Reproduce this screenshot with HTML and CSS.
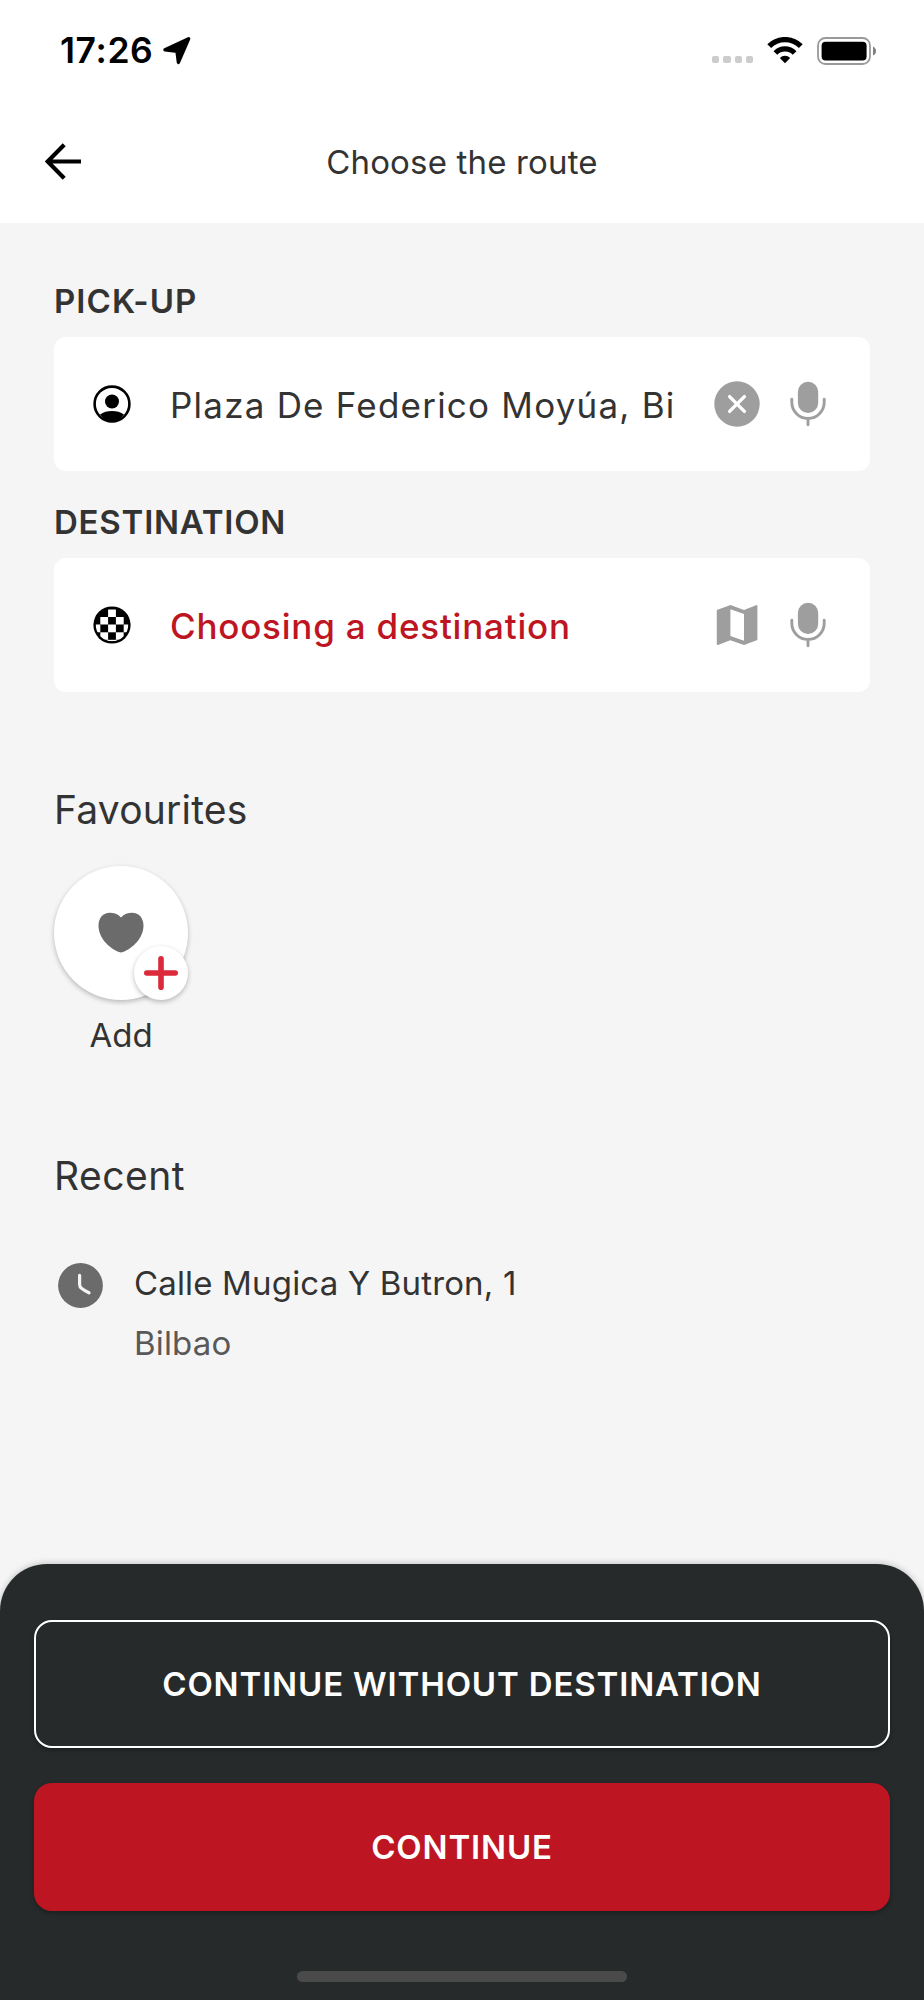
FILE: index.html
```html
<!DOCTYPE html>
<html lang="en">
<head>
    <meta charset="UTF-8">
    <meta name="viewport" content="width=device-width, initial-scale=1.0">
    <title>Choose the route</title>
    <link rel="stylesheet" href="styles.css">
</head>
<body>
    <div class="status-bar">
        <div class="time">17:26</div>
        <svg class="location" width="28" height="28" viewBox="0 0 28 28">
            <path d="M25.6 1.8 L15.4 25.4 L14 14.2 L2 12.8 Z" fill="#000" stroke="#000" stroke-width="3.4" stroke-linejoin="round"/>
        </svg>
        <div class="signal">
            <span></span>
            <span></span>
            <span></span>
            <span></span>
        </div>
        <svg class="wifi" width="36" height="27" viewBox="0 0 36 27">
            <path d="M2.2 9.2 A22.3 22.3 0 0 1 33.8 9.2" fill="none" stroke="#000" stroke-width="5.4"/>
            <path d="M8.4 16 A13.4 13.4 0 0 1 27.6 16" fill="none" stroke="#000" stroke-width="5.2"/>
            <path d="M12.8 20.9 A7.6 7.6 0 0 1 23.2 20.9 L18 26.3 Z"/>
        </svg>
        <svg class="battery" width="60" height="28" viewBox="0 0 60 28">
            <rect x="1" y="1" width="52" height="26" rx="7.5" fill="none" stroke="#999" stroke-width="1.8"/>
            <rect x="4.6" y="4.7" width="45" height="18.7" rx="4"/>
            <path d="M56 9.5 Q59 11 59 14 Q59 17 56 18.5 Z" fill="#808080"/>
        </svg>
    </div>

    <div class="app-bar">
        <svg class="back" width="37" height="37" viewBox="0 0 37 37">
            <path d="M36 18.5 H3 M19.2 1.8 L2.6 18.5 L19.2 35.2" fill="none" stroke="#000" stroke-width="4.2"/>
        </svg>
        <div class="title">Choose the route</div>
    </div>

    <div class="content">
        <div class="label pickup-label">PICK-UP</div>
        <div class="card">
            <svg width="38" height="38" viewBox="0 0 38 38">
                <circle cx="19" cy="19" r="17.4" fill="none" stroke="#000" stroke-width="2.6"/>
                <circle cx="19" cy="16.5" r="7"/>
                <path d="M7 29.4 Q12 26 19 26 Q26 26 31 29.4 Q26 36.4 19 36.4 Q12 36.4 7 29.4 Z"/>
            </svg>
            <div class="address">Plaza De Federico Moyúa, Bi</div>
            <svg class="action" width="46" height="46" viewBox="0 0 46 46">
                <circle cx="23" cy="23" r="22.7" fill="#9e9e9e"/>
                <path d="M15.6 15.6 L30.4 30.4 M30.4 15.6 L15.6 30.4" stroke="#fff" stroke-width="3.4" stroke-linecap="round"/>
            </svg>
            <svg class="mic" width="36" height="46" viewBox="0 0 36 46">
                <rect x="7.9" y="0.7" width="20.3" height="31.3" rx="10.1" fill="#9e9e9e"/>
                <path d="M1.8 18.3 V21.3 A16.2 16.2 0 0 0 34.2 21.3 V18.3 M18 38 V43.8" fill="none" stroke="#9e9e9e" stroke-width="2.9" stroke-linecap="round"/>
            </svg>
        </div>

        <div class="label">DESTINATION</div>
        <div class="card">
            <svg width="38" height="38" viewBox="0 0 38 38">
                <defs>
                    <clipPath id="ball"><circle cx="19" cy="19" r="16.2"/></clipPath>
                </defs>
                <circle cx="19" cy="19" r="18.6"/>
                <g clip-path="url(#ball)" fill="#fff">
                    <rect x="15.1" y="3.5" width="7.8" height="7.5"/>
                    <rect x="7.3" y="11" width="7.8" height="7.5"/>
                    <rect x="22.9" y="11" width="7.8" height="7.5"/>
                    <rect x="0" y="18.5" width="7.3" height="7.8"/>
                    <rect x="15.1" y="18.5" width="7.8" height="7.8"/>
                    <rect x="30.7" y="18.5" width="7.3" height="7.8"/>
                    <rect x="7.3" y="26.3" width="7.8" height="7.5"/>
                    <rect x="22.9" y="26.3" width="7.8" height="7.5"/>
                    <rect x="14" y="33.8" width="10" height="1.4"/>
                </g>
            </svg>
            <div class="address choosing">Choosing a destination</div>
            <svg class="action" width="46" height="46" viewBox="0 0 46 46">
                <path fill-rule="evenodd" fill="#9e9e9e" d="M2.8 8.1 L16.5 3.1 L30 7.9 L42 3.2 Q43.4 2.8 43.4 4 V38 L30 43 L16.3 38.2 L4 42.9 Q2.8 43.2 2.8 42 Z M16.4 7.2 V33.9 L30 38.8 V12 Z"/>
            </svg>
            <svg class="mic" width="36" height="46" viewBox="0 0 36 46">
                <rect x="7.9" y="0.7" width="20.3" height="31.3" rx="10.1" fill="#9e9e9e"/>
                <path d="M1.8 18.3 V21.3 A16.2 16.2 0 0 0 34.2 21.3 V18.3 M18 38 V43.8" fill="none" stroke="#9e9e9e" stroke-width="2.9" stroke-linecap="round"/>
            </svg>
        </div>

        <div class="heading favourites-heading">Favourites</div>
        <div class="favourite">
            <div class="circle">
                <svg width="46" height="42" viewBox="0 0 46 42">
                    <path d="M23 5.4 C26 2 30 0.7 34 0.7 C41 0.7 45.5 6 45.5 13.5 C45.5 26 35 36 25 40 Q23 40.8 21 40 C11 36 0.5 26 0.5 13.5 C0.5 6 5 0.7 12 0.7 C16 0.7 20 2 23 5.4 Z" fill="#6b6b6b"/>
                </svg>
                <div class="plus">
                    <svg width="34" height="34" viewBox="0 0 34 34">
                        <path d="M17 2.8 V31.2 M2.8 17 H31.2" stroke="#dc2a3a" stroke-width="5.6" stroke-linecap="round"/>
                    </svg>
                </div>
            </div>
            <div class="favourite-name">Add</div>
        </div>

        <div class="heading recent-heading">Recent</div>
        <div class="recent">
            <svg class="clock" width="45" height="45" viewBox="0 0 45 45">
                <circle cx="22.5" cy="22.5" r="22.4" fill="#6b6b6b"/>
                <path d="M21.6 12.4 V21.5 Q21.6 24 23.8 25.5 Q27 28 31 29.8" fill="none" stroke="#f5f5f5" stroke-width="3.2" stroke-linecap="round"/>
            </svg>
            <div>
                <div class="street">Calle Mugica Y Butron, 1</div>
                <div class="town">Bilbao</div>
            </div>
        </div>
    </div>

    <div class="bottom-sheet">
        <button class="button outline">CONTINUE WITHOUT DESTINATION</button>
        <button class="button primary">CONTINUE</button>
        <div class="home-indicator"></div>
    </div>
</body>
</html>
```
FILE: styles.css
```css
* {
    box-sizing: border-box;
}
body {
    margin: 0;
    height: 2000px;
    display: flex;
    flex-direction: column;
    overflow: hidden;
    background: #f5f5f5;
    color: #333;
    font-family: Inter, "Liberation Sans", sans-serif;
    font-size: 33px;
}
svg {
    display: block;
    flex-shrink: 0;
}
.status-bar {
    display: flex;
    align-items: center;
    height: 101px;
    padding-left: 60px;
    padding-right: 47px;
    background: #fff;
    color: #000;
}
.time {
    font-size: 35.5px;
    font-weight: 600;
    letter-spacing: 0.6px;
    width: 103px;
}
.signal {
    display: flex;
    gap: 4px;
    margin-left: auto;
    margin-top: 18px;
}
.signal span {
    width: 7.2px;
    height: 7.2px;
    border-radius: 2px;
    background: #ccc;
}
.wifi {
    margin-left: 14px;
}
.battery {
    margin-left: 14px;
}
.app-bar {
    display: grid;
    grid-template-columns: 60px 1fr 60px;
    align-items: center;
    height: 122px;
    padding: 0 45px;
    background: #fff;
}
.title {
    text-align: center;
    letter-spacing: 0.17px;
}
.back {
    margin-top: -2px;
}
.content {
    flex: 1;
    padding: 56px 54px 0;
}
.label {
    margin: 29px 0 14px;
    line-height: 44px;
    font-weight: 600;
    letter-spacing: 0.77px;
}
.pickup-label {
    margin-top: 0;
    letter-spacing: 1.07px;
}
.card {
    display: flex;
    align-items: center;
    height: 134px;
    padding: 0 44px 0 39px;
    border-radius: 12px;
    background: #fff;
}
.address {
    width: 506px;
    margin-left: 39px;
    padding-top: 1px;
    overflow: hidden;
    white-space: nowrap;
    font-size: 35px;
    line-height: 48px;
    letter-spacing: 1.22px;
}
.choosing {
    color: #be1522;
    font-weight: 500;
    letter-spacing: 0.78px;
}
.action {
    margin-left: auto;
}
.mic {
    margin-left: 30px;
}
.heading {
    font-size: 39px;
    line-height: 48px;
    letter-spacing: 0.5px;
}
.favourites-heading {
    margin: 94px 0 32px;
    letter-spacing: 0.2px;
}
.favourite {
    width: 134px;
}
.circle {
    position: relative;
    display: flex;
    align-items: center;
    justify-content: center;
    height: 134px;
    border-radius: 50%;
    background: #fff;
    box-shadow: 0 2px 5px rgba(0, 0, 0, 0.25);
}
.plus {
    position: absolute;
    right: 0;
    bottom: 0;
    display: flex;
    align-items: center;
    justify-content: center;
    width: 54px;
    height: 54px;
    border-radius: 50%;
    background: #fff;
    box-shadow: 0 2px 5px rgba(0, 0, 0, 0.25);
}
.favourite-name {
    margin-top: 15px;
    line-height: 40px;
    text-align: center;
}
.recent-heading {
    margin: 97px 0 53px;
}
.recent {
    display: flex;
    gap: 31px;
    padding-left: 4px;
    line-height: 60px;
    letter-spacing: 0.16px;
}
.clock {
    margin-top: 10px;
}
.town {
    color: #595959;
}
.bottom-sheet {
    display: flex;
    flex-direction: column;
    align-items: center;
    height: 436px;
    padding: 56px 34px 0;
    border-radius: 47px 47px 0 0;
    background: #262a2b;
    box-shadow: 0 -1px 6px rgba(0, 0, 0, 0.2);
}
.button {
    width: 100%;
    height: 128px;
    border: 0;
    border-radius: 18px;
    color: #fff;
    font: inherit;
    font-weight: 600;
    letter-spacing: 0.84px;
    box-shadow: 0 2px 4px rgba(0, 0, 0, 0.3);
}
.outline {
    border: 2px solid #fff;
    background: #262a2b;
}
.primary {
    margin-top: 35px;
    background: #be1522;
}
.home-indicator {
    width: 330px;
    height: 11px;
    margin-top: 60px;
    border-radius: 6px;
    background: #4a4a4a;
}
```
